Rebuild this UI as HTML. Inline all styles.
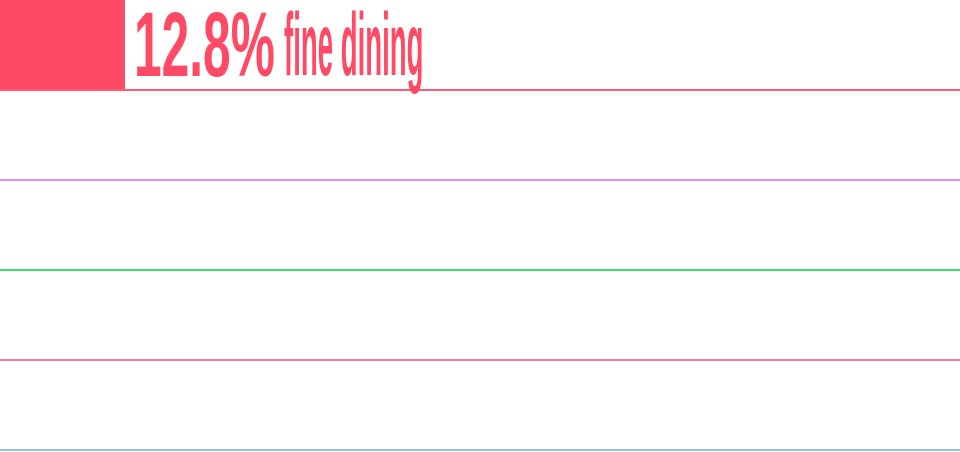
<!DOCTYPE html>
<html><head><meta charset="utf-8"><style>
html,body{margin:0;padding:0;background:#fff;width:960px;height:452px;overflow:hidden;position:relative}
.bar{position:absolute;left:0;top:0;width:125px;height:90px;background:#ff4a66}
.l{position:absolute;left:0;width:960px;height:2px}
.t{position:absolute;top:0;white-space:nowrap;color:#ff4a66;font-family:"Liberation Sans",sans-serif;transform-origin:0 0;line-height:1}
</style></head><body>
<div class="bar"></div>
<div class="l" style="top:89px;background:#ff5a72"></div>
<div class="l" style="top:179px;background:#e48af5"></div>
<div class="l" style="top:269px;background:#3ddc64"></div>
<div class="l" style="top:359px;background:#f27aa6"></div>
<div class="l" style="top:449px;background:#92bcf6"></div>
<div class="t" style="left:134px;top:-1px;font-size:92px;font-weight:bold;transform:scaleX(0.54)">12.8%</div>
<div class="t" style="left:284px;top:0px;font-size:89px;font-weight:bold;transform:scaleX(0.31)">fine dining</div>
</body></html>
